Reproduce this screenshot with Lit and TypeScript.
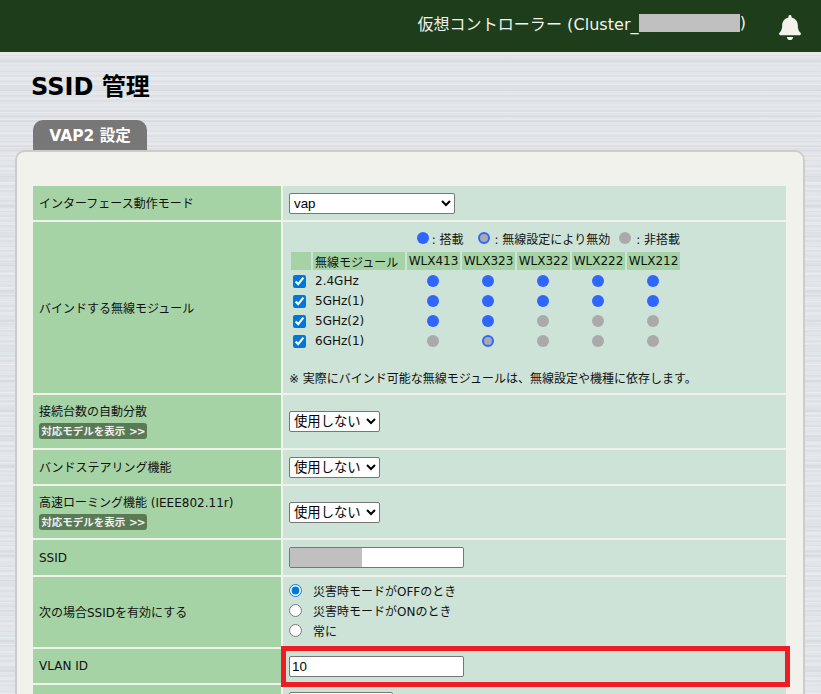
import { html, css, LitElement } from "lit";
import { customElement } from "lit/decorators.js";

const MODELS = ["WLX413", "WLX323", "WLX322", "WLX222", "WLX212"];
// y = loaded, n = not loaded, r = disabled by radio settings
const BANDS = [
  { name: "2.4GHz", dots: "yyyyy" },
  { name: "5GHz(1)", dots: "yyyyy" },
  { name: "5GHz(2)", dots: "yynnn" },
  { name: "6GHz(1)", dots: "nrnnn" },
];

@customElement("app-root")
export class AppRoot extends LitElement {
  static styles = css`
    :host {
      display: block;
      height: 694px;
      overflow: hidden;
      font-family: "DejaVu Sans", "Noto Sans CJK JP", sans-serif;
      font-size: 12px;
      color: #111;
      background-color: #e2e5e9;
      background-image:
        repeating-linear-gradient(180deg, rgba(255, 255, 255, 0.22) 0 1px, transparent 1px 7px),
        repeating-linear-gradient(180deg, rgba(120, 125, 135, 0.05) 0 2px, transparent 2px 5px),
        repeating-linear-gradient(180deg, rgba(255, 255, 255, 0.14) 0 3px, transparent 3px 13px),
        repeating-linear-gradient(180deg, rgba(110, 115, 130, 0.04) 0 6px, transparent 6px 29px);
    }
    .topbar {
      height: 52px;
      background: #1e3d1a;
      color: #f2f2f2;
      display: flex;
      align-items: center;
      justify-content: flex-end;
      padding-right: 20px;
      font-size: 16px;
    }
    .cluster {
      display: flex;
      align-items: center;
      margin-right: 33px;
      margin-top: -7px;
      letter-spacing: 0.06px;
    }
    .mask {
      display: inline-block;
      width: 101px;
      height: 18px;
      background: #c0c0c0;
    }
    .bell {
      width: 22px;
      height: 25px;
      fill: #f2f2ea;
      margin-top: 2px;
    }
    h1 {
      margin: 0;
      padding: 20px 0 0 31px;
      height: 48px;
      font-size: 24px;
      line-height: 30px;
      font-weight: bold;
      color: #000;
    }
    .tab {
      margin-left: 33px;
      width: 114px;
      height: 30px;
      box-sizing: border-box;
      background: #777;
      border-radius: 10px 10px 0 0;
      color: #fff;
      font-size: 15.5px;
      font-weight: bold;
      line-height: 32px;
      text-align: center;
      white-space: nowrap;
    }
    .panel {
      margin: 0 16px 0 15px;
      background: #f1f2ec;
      border: 2px solid #ccc;
      border-bottom: none;
      border-radius: 10px 10px 0 0;
      padding: 32px 14px 40px;
    }
    table.form {
      border-collapse: separate;
      border-spacing: 2px;
      width: 757px;
      table-layout: fixed;
    }
    .form > tbody > tr > th {
      box-sizing: border-box;
      width: 248px;
      background: #a5d3a5;
      font-weight: normal;
      text-align: left;
      padding: 0 6px 2px;
      vertical-align: middle;
    }
    .form > tbody > tr.low > th {
      padding-bottom: 0;
    }
    .form > tbody > tr > td {
      box-sizing: border-box;
      background: #cde3d7;
      padding: 0 6px;
      vertical-align: middle;
    }
    .r34 > * { height: 34px; }
    .r35 > * { height: 35px; }
    .r52 > * { height: 52px; }
    .r53 > * { height: 53px; }
    .r70 > * { height: 70px; }
    .r171 > * { height: 171px; }
    .form > tbody > tr > td.bind {
      vertical-align: top;
    }
    .form > tbody > tr > td.choices {
      padding-bottom: 4px;
    }
    .more {
      display: block;
      width: 108px;
      height: 16px;
      margin-top: 4px;
      box-sizing: border-box;
      background: #5a7a55;
      border-radius: 3px;
      color: #f0f0f0;
      font-size: 10.5px;
      font-weight: bold;
      line-height: 16px;
      text-align: center;
      white-space: nowrap;
    }
    .more b {
      letter-spacing: -1px;
    }
    select,
    input[type="text"] {
      display: block;
      box-sizing: border-box;
      height: 21px;
      margin: 0;
      background: #fff;
      border: 1px solid #767676;
      border-radius: 2px;
      font-family: "Liberation Sans", "Noto Sans CJK JP", sans-serif;
      font-size: 13.33px;
      color: #000;
    }
    select.wide { width: 166px; }
    select.narrow { width: 91px; }
    input[type="text"] {
      width: 175px;
      padding: 1px 2px;
    }
    input.short[type="text"] { width: 104px; }
    .ssid-wrap {
      position: relative;
      width: 175px;
    }
    .ssid-mask {
      position: absolute;
      left: 1px;
      top: 1px;
      width: 72px;
      height: 19px;
      background: #c0c0c0;
    }
    .legend {
      display: flex;
      justify-content: flex-end;
      align-items: center;
      gap: 9px;
      width: 391px;
      height: 18px;
      margin-top: 7px;
      margin-bottom: 3px;
    }
    .legend span {
      display: flex;
      align-items: center;
      gap: 5px;
    }
    .legend span:first-child {
      gap: 3px;
      margin-right: 5px;
    }
    table.modules {
      border-collapse: separate;
      border-spacing: 2px;
    }
    .modules th {
      height: 18px;
      padding: 0;
      background: #a5d3a5;
      font-weight: normal;
      white-space: nowrap;
    }
    .modules th.blank { width: 20px; }
    .modules th.title { width: 90px; padding-left: 2px; text-align: left; }
    .modules th.model { width: 53px; }
    .modules td {
      height: 18px;
      padding: 0;
    }
    .modules td.band { padding-left: 2px; }
    .modules td .dot {
      display: block;
      margin-left: 20px;
    }
    .modules input {
      display: block;
      width: 13px;
      height: 13px;
      margin: 0 0 0 2px;
      accent-color: #0078d7;
    }
    .dot {
      display: inline-block;
      width: 12px;
      height: 12px;
      box-sizing: border-box;
      border-radius: 50%;
      flex: none;
    }
    .dot.y { background: #2f66ff; }
    .dot.n { background: #aaa; }
    .dot.r { background: #aaa; border: 2px solid #2f66ff; }
    .note { margin-top: 17px; }
    .radios {
      display: flex;
      flex-direction: column;
      gap: 0;
    }
    .radios label {
      display: flex;
      align-items: center;
      height: 20px;
    }
    .radios input {
      width: 13px;
      height: 13px;
      margin: 0 11px 0 0;
      accent-color: #0078d7;
    }
    .vlan { position: relative; }
    .highlight {
      position: absolute;
      left: -2px;
      right: -4px;
      top: -3px;
      bottom: -4px;
      border: 5px solid #ee1c25;
      pointer-events: none;
    }
  `;

  renderMore() {
    return html`<span class="more">対応モデルを表示 <b>&gt;&gt;</b></span>`;
  }

  renderOffSelect() {
    return html`<select class="narrow"><option>使用しない</option></select>`;
  }

  render() {
    return html`
      <div class="topbar">
        <div class="cluster">仮想コントローラー (Cluster_<span class="mask"></span>)</div>
        <svg class="bell" viewBox="0 0 448 512">
          <path
            d="M224 512c35.32 0 63.97-28.65 63.97-64H160.03c0 35.35 28.65 64 63.97 64zm215.39-149.71c-19.32-20.76-55.47-51.99-55.47-154.29 0-77.7-54.48-139.9-127.94-155.16V32c0-17.67-14.32-32-31.98-32s-31.98 14.33-31.98 32v20.84C118.56 68.1 64.08 130.3 64.08 208c0 102.3-36.15 133.53-55.47 154.29-6 6.45-8.66 14.16-8.61 21.71.11 16.4 12.98 32 32.1 32h383.8c19.12 0 32-15.6 32.1-32 .05-7.55-2.61-15.27-8.61-21.71z"
          ></path>
        </svg>
      </div>
      <h1>SSID 管理</h1>
      <div class="tab">VAP2 設定</div>
      <div class="panel">
        <table class="form">
          <tbody>
            <tr class="r34">
              <th>インターフェース動作モード</th>
              <td><select class="wide"><option>vap</option></select></td>
            </tr>
            <tr class="r171 low">
              <th>バインドする無線モジュール</th>
              <td class="bind">
                <div class="legend">
                  <span><i class="dot y"></i>: 搭載</span>
                  <span><i class="dot r"></i>: 無線設定により無効</span>
                  <span><i class="dot n"></i>: 非搭載</span>
                </div>
                <table class="modules">
                  <tbody>
                    <tr>
                      <th class="blank"></th>
                      <th class="title">無線モジュール</th>
                      ${MODELS.map((m) => html`<th class="model">${m}</th>`)}
                    </tr>
                    ${BANDS.map(
                      (b) => html`
                        <tr>
                          <td><input type="checkbox" checked /></td>
                          <td class="band">${b.name}</td>
                          ${[...b.dots].map((d) => html`<td><i class="dot ${d}"></i></td>`)}
                        </tr>
                      `
                    )}
                  </tbody>
                </table>
                <div class="note">※ 実際にバインド可能な無線モジュールは、無線設定や機種に依存します。</div>
              </td>
            </tr>
            <tr class="r53">
              <th>接続台数の自動分散${this.renderMore()}</th>
              <td>${this.renderOffSelect()}</td>
            </tr>
            <tr class="r34">
              <th>バンドステアリング機能</th>
              <td>${this.renderOffSelect()}</td>
            </tr>
            <tr class="r52">
              <th>高速ローミング機能 (IEEE802.11r)${this.renderMore()}</th>
              <td>${this.renderOffSelect()}</td>
            </tr>
            <tr class="r35 low">
              <th>SSID</th>
              <td>
                <div class="ssid-wrap">
                  <input type="text" />
                  <div class="ssid-mask"></div>
                </div>
              </td>
            </tr>
            <tr class="r70">
              <th>次の場合SSIDを有効にする</th>
              <td class="choices">
                <div class="radios">
                  <label><input type="radio" name="when" checked />災害時モードがOFFのとき</label>
                  <label><input type="radio" name="when" />災害時モードがONのとき</label>
                  <label><input type="radio" name="when" />常に</label>
                </div>
              </td>
            </tr>
            <tr class="r34 low">
              <th>VLAN ID</th>
              <td class="vlan">
                <input type="text" value="10" />
                <div class="highlight"></div>
              </td>
            </tr>
            <tr class="r34">
              <th></th>
              <td><input class="short" type="text" /></td>
            </tr>
          </tbody>
        </table>
      </div>
    `;
  }
}
